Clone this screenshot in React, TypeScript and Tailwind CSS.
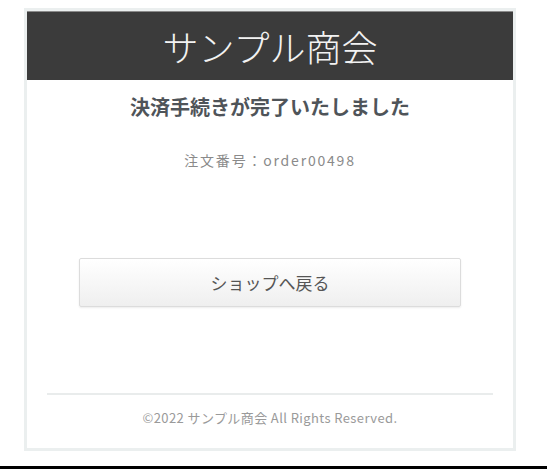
import React from "react";

export default function App() {
  const font = { fontFamily: '"Noto Sans CJK JP", "Noto Sans", sans-serif' };
  return (
    <div className="w-[547px] h-[475px] bg-white overflow-hidden" style={font}>
      <div className="pt-[8px] h-[466px]">
        <div className="ml-[24px] w-[492px] border-[3px] border-[#ebefef] bg-white">
          <div className="h-[69px] bg-[#3b3b3b] border-t border-[#8a8a8a] flex items-center justify-center">
            <span className="text-[36px] leading-none text-[#f2f2f2] font-light">サンプル商会</span>
          </div>
          <div className="flex flex-col items-center">
            <div className="mt-[14px] h-[26px] leading-[26px] text-[20px] font-bold text-[#4f5459]">
              決済手続きが完了いたしました
            </div>
            <div className="mt-[30px] h-[20px] leading-[20px] text-[14px] text-[#8a8a8a] tracking-[1.8px]">
              注文番号：order00498
            </div>
            <button className="mt-[88px] w-[382px] h-[49px] rounded-[2px] border border-[#dcdcdc] bg-gradient-to-b from-white to-[#efefef] shadow-[0_1px_2px_rgba(0,0,0,0.08)] text-[17px] text-[#555] flex items-center justify-center">
              ショップへ戻る
            </button>
          </div>
          <div className="mx-[20px] mt-[86px] h-[2px] bg-[#e9ecec]" />
          <div className="mt-[14px] mb-[21px] h-[18px] leading-[18px] text-center text-[13px] tracking-[0.4px] text-[#9a9a9a]">
            ©2022 サンプル商会 All Rights Reserved.
          </div>
        </div>
      </div>
      <div className="h-[3px] bg-black" />
    </div>
  );
}
